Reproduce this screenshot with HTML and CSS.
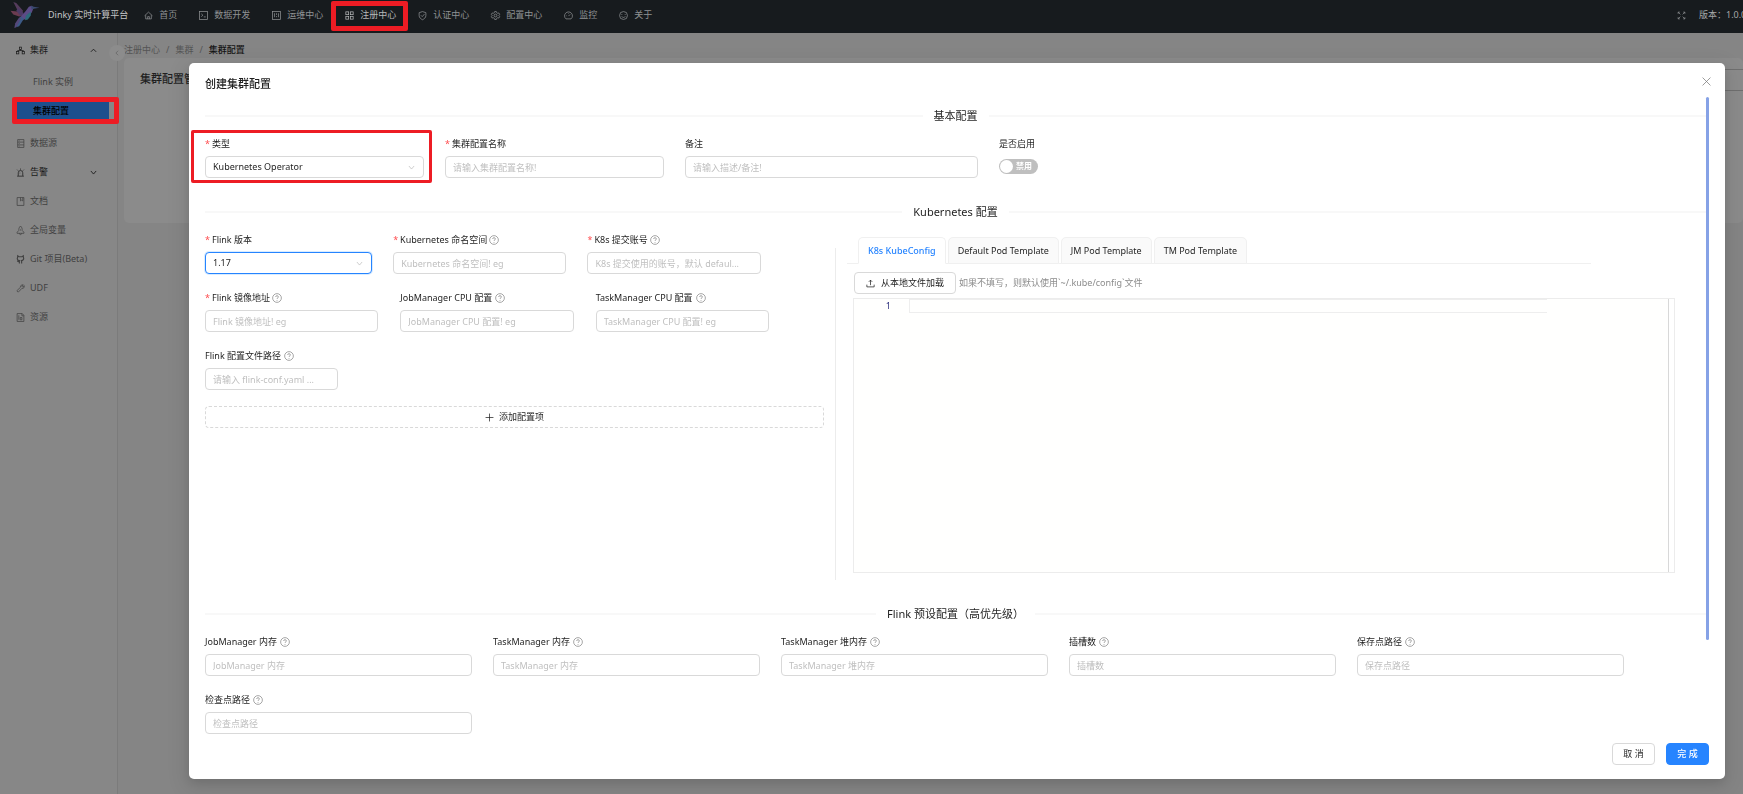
FILE: index.html
```
<!DOCTYPE html>
<html lang="zh-CN">
<head>
<meta charset="utf-8">
<meta name="viewport" content="width=device-width, initial-scale=1">
<title>Dinky 实时计算平台</title>
<link rel="stylesheet" href="styles.css">
</head>
<body>
<svg class="sprite" aria-hidden="true">
  <symbol id="i-help" viewBox="0 0 16 16"><circle cx="8" cy="8" r="7"/><path d="M5.8 6.4c0-1.300 1-2.200 2.200-2.200s2.200.9 2.200 2.100c0 1.500-2.200 1.600-2.200 3.200M8 11.200v1.200"/></symbol>
  <symbol id="i-down" viewBox="0 0 16 16"><path d="M2 4.500l6 7 6-7"/></symbol>
  <symbol id="i-up" viewBox="0 0 16 16"><path d="M2 11l6-6 6 6"/></symbol>
</svg>
<header class="topbar">
  <svg class="logo" viewBox="0 0 40 34" aria-hidden="true">
    <path fill="#553c5c" d="M9 3l3 1 7 8-1 3-4-2z"/>
    <path fill="#6b3b50" d="M6 12l7 1 6 4-4 1-6-2z"/>
    <path fill="#4d3a66" d="M14 9l5 5 2 4-5-1-4-5z"/>
    <path fill="#5c4b86" d="M16 19l6-7 3-4 3-1 2 2-2 5-5 6-5 2z"/>
    <path fill="#3a4a70" d="M27 7l3 1 6 1-6 1-2 1z"/>
    <path fill="#2d6a7a" d="M22 17l5-4v4l-3 4-3 1z"/>
    <path fill="#3c5a86" d="M16 18l4 2-5 8-3 1 1-5z"/>
    <path fill="#54487a" d="M15 19l2 1-5 9-2 1 1-5z"/>
  </svg>
  <span class="brand">Dinky 实时计算平台</span>
  <nav class="menu">
    <a href="#"><svg viewBox="0 0 16 16"><path d="M1 8.500L8 2l7 6.500M3 7.500V14h10V7.500M6.500 14v-4h3v4"/></svg>首页</a>
    <a href="#"><svg viewBox="0 0 16 16"><rect x="1" y="1" width="14" height="14"/><path d="M4 5l3 2.500L4 10M8.500 10.500H12"/></svg>数据开发</a>
    <a href="#"><svg viewBox="0 0 16 16"><rect x="1" y="1" width="14" height="14"/><path d="M4.500 4v7M8 4v3M8 9v2M11.500 4v7"/></svg>运维中心</a>
    <a href="#" class="current"><svg viewBox="0 0 16 16"><rect x="1.500" y="1.500" width="5" height="5"/><rect x="9.500" y="1.500" width="5" height="5"/><rect x="1.500" y="9.500" width="5" height="5"/><rect x="9.500" y="9.500" width="5" height="5"/></svg>注册中心<i class="mark mark-top"></i></a>
    <a href="#"><svg viewBox="0 0 16 16"><path d="M8 1l6 2v5c0 4-3 6-6 7.500C5 14 2 12 2 8V3zM5 7.500L7.500 10 11.500 5.500"/></svg>认证中心</a>
    <a href="#"><svg viewBox="0 0 16 16"><path d="M6.500 1h3l.6 2 1.700 1 2.100-.5 1.500 2.600L14 8l1.400 1.900-1.500 2.600-2.100-.5-1.700 1-.6 2h-3l-.6-2-1.700-1-2.100.5L.6 9.900 2 8 .6 6.100l1.500-2.600 2.100.5 1.700-1z"/><circle cx="8" cy="8" r="2.500"/></svg>配置中心</a>
    <a href="#"><svg viewBox="0 0 16 16"><path d="M3.500 14a7 7 0 1 1 9 0zM8 9l3-3M4 8.500h1M8 3.500v1"/></svg>监控</a>
    <a href="#"><svg viewBox="0 0 16 16"><circle cx="8" cy="8" r="7"/><path d="M5 5.500v1.500M11 5.500v1.500M4.800 9.500c1 2.600 5.400 2.600 6.400 0"/></svg>关于</a>
  </nav>
  <div class="tools">
    <svg viewBox="0 0 16 16" aria-label="全屏"><path d="M2 5V2h3M2 2l4 4M11 2h3v3M14 2l-4 4M2 11v3h3M2 14l4-4M14 11v3h-3M14 14l-4-4"/></svg>
    <span>版本：1.0.0</span>
  </div>
</header>
<div class="page">
  <aside class="sidebar">
    <nav>
      <a href="#" class="dark"><svg viewBox="0 0 16 16"><rect x="6" y="2" width="4" height="4"/><rect x="1" y="10" width="4" height="4"/><rect x="11" y="10" width="4" height="4"/><path d="M8 6v2M3 10V8h10v2"/></svg><span>集群</span><svg class="caret"><use href="#i-up"/></svg></a>
      <a href="#" class="sub first">Flink 实例</a>
      <a href="#" class="sub active"><span>集群配置</span><i class="mark mark-side"></i></a>
      <a href="#"><svg viewBox="0 0 16 16"><path d="M3 1h11v14H3zM3 5.500h11M3 10.500h11M5 3.300h1.500M5 8h1.500M5 12.700h1.500"/></svg><span>数据源</span></a>
      <a href="#" class="dark"><svg viewBox="0 0 16 16"><path d="M2 14.500h12M4 14V8.500a4 4 0 0 1 8 0V14M8 1v2M2 3l1.500 1.500M14 3l-1.500 1.500M6.500 9h1"/></svg><span>告警</span><svg class="caret"><use href="#i-down"/></svg></a>
      <a href="#"><svg viewBox="0 0 16 16"><path d="M2 1h12v14H2zM8 1v6l2-1.500L12 7V1"/></svg><span>文档</span></a>
      <a href="#"><svg viewBox="0 0 16 16"><path d="M8 0c3 3 3 5 3 8l3 3v2H2v-2l3-3c0-3 0-5 3-8zM6 13c0 3 4 3 4 0M8 6v2"/></svg><span>全局变量</span></a>
      <a href="#"><svg viewBox="0 0 16 16"><path stroke-width="2" d="M6 15v-3c-3 .5-3-1-4-1.500M10 15v-3.500c0-1-.3-1.500-.3-1.500 3-.3 4-2 4-4.200L13 4V1.500L10.500 3h-5L3 1.500V4l-.7 2c0 2.200 1 3.700 4 4L6 12"/></svg><span>Git 项目(Beta)</span></a>
      <a href="#"><svg viewBox="0 0 16 16"><path d="M13 1.500l-2.500 2.500 1.500 1.500L14.500 3c1.200 3-1.300 5.400-4 4.700L4 14.500 1.500 12l6.500-6.300C7.300 3 10 .8 13 1.500z"/></svg><span>UDF</span></a>
      <a href="#"><svg viewBox="0 0 16 16"><path d="M2 1h9l3 3v11H2zM10.500 1v4H14M5 4v8M7.500 8v4h3V8z"/></svg><span>资源</span></a>
    </nav>
    <button class="collapse" aria-label="收起"><svg viewBox="0 0 16 16"><path d="M11 2L5 8l6 6"/></svg></button>
  </aside>
  <main class="main">
    <div class="crumbs"><span>注册中心</span><span>/</span><span>集群</span><span>/</span><b>集群配置</b></div>
    <section class="card"><h2>集群配置管理</h2><input class="search" aria-label="搜索"></section>
  </main>
</div>

<div class="overlay">
<form class="dialog" role="dialog" aria-labelledby="dlg-title">
  <header class="dialog-head"><h1 id="dlg-title">创建集群配置</h1>
    <button type="button" class="close" aria-label="关闭"><svg viewBox="0 0 16 16"><path d="M1 1l14 14M15 1L1 15"/></svg></button></header>
  <div class="dialog-body">
    <h3 class="divider">基本配置</h3>
    <div class="basic">
      <div class="field"><label for="type" class="req">类型</label><div class="select"><select id="type"><option>Kubernetes Operator</option></select><svg><use href="#i-down"/></svg></div><i class="mark mark-field"></i></div>
      <div class="field"><label for="name" class="req">集群配置名称</label><input id="name" placeholder="请输入集群配置名称!"></div>
      <div class="field"><label for="note">备注</label><input id="note" placeholder="请输入描述/备注!"></div>
      <div class="field"><label for="enabled">是否启用</label><label class="switch"><input id="enabled" type="checkbox" role="switch"><span>禁用</span></label></div>
    </div>

    <h3 class="divider">Kubernetes 配置</h3>
    <div class="k8s">
      <div class="k8s-form">
        <div class="row row-first">
          <div class="field w-version"><label for="ver" class="req">Flink 版本</label><div class="select focus"><select id="ver"><option>1.17</option></select><svg><use href="#i-down"/></svg></div></div>
          <div class="field w-text"><label for="ns" class="req">Kubernetes 命名空间<svg><use href="#i-help"/></svg></label><input id="ns" placeholder="Kubernetes 命名空间! eg"></div>
          <div class="field w-text"><label for="acc" class="req">K8s 提交账号<svg><use href="#i-help"/></svg></label><input id="acc" placeholder="K8s 提交使用的账号，默认 defaul..."></div>
        </div>
        <div class="row">
          <div class="field w-text"><label for="img" class="req">Flink 镜像地址<svg><use href="#i-help"/></svg></label><input id="img" placeholder="Flink 镜像地址! eg"></div>
          <div class="field w-text"><label for="jmcpu">JobManager CPU 配置<svg><use href="#i-help"/></svg></label><input id="jmcpu" placeholder="JobManager CPU 配置! eg"></div>
          <div class="field w-text"><label for="tmcpu">TaskManager CPU 配置<svg><use href="#i-help"/></svg></label><input id="tmcpu" placeholder="TaskManager CPU 配置! eg"></div>
        </div>
        <div class="row">
          <div class="field w-path"><label for="conf">Flink 配置文件路径<svg><use href="#i-help"/></svg></label><input id="conf" placeholder="请输入 flink-conf.yaml ..."></div>
        </div>
        <button type="button" class="add"><svg viewBox="0 0 16 16"><path d="M8 1v14M1 8h14"/></svg>添加配置项</button>
      </div>
      <div class="rule"></div>
      <div class="k8s-files">
        <div class="tabs" role="tablist">
          <button type="button" role="tab" aria-selected="true">K8s KubeConfig</button>
          <button type="button" role="tab">Default Pod Template</button>
          <button type="button" role="tab">JM Pod Template</button>
          <button type="button" role="tab">TM Pod Template</button>
        </div>
        <div class="upload">
          <button type="button" class="btn"><svg viewBox="0 0 16 16"><path d="M1.500 10v4h13v-4M8 11V2M5 5l3-3 3 3"/></svg>从本地文件加载</button>
          <span>如果不填写，则默认使用`~/.kube/config`文件</span>
        </div>
        <div class="editor">
          <span class="lineno">1</span>
          <div class="code"><textarea rows="1" aria-label="KubeConfig"></textarea></div>
          <div class="ruler"></div>
        </div>
      </div>
    </div>

    <h3 class="divider">Flink 预设配置（高优先级）</h3>
    <div class="presets">
      <div class="field"><label for="p1">JobManager 内存<svg><use href="#i-help"/></svg></label><input id="p1" placeholder="JobManager 内存"></div>
      <div class="field"><label for="p2">TaskManager 内存<svg><use href="#i-help"/></svg></label><input id="p2" placeholder="TaskManager 内存"></div>
      <div class="field"><label for="p3">TaskManager 堆内存<svg><use href="#i-help"/></svg></label><input id="p3" placeholder="TaskManager 堆内存"></div>
      <div class="field"><label for="p4">插槽数<svg><use href="#i-help"/></svg></label><input id="p4" placeholder="插槽数"></div>
      <div class="field"><label for="p5">保存点路径<svg><use href="#i-help"/></svg></label><input id="p5" placeholder="保存点路径"></div>
      <div class="field"><label for="p6">检查点路径<svg><use href="#i-help"/></svg></label><input id="p6" placeholder="检查点路径"></div>
    </div>
    <i class="thumb"></i>
  </div>
  <footer class="dialog-foot">
    <button type="button" class="btn">取 消</button>
    <button type="button" class="btn primary">完 成</button>
  </footer>
</form>
</div>
</body>
</html>
```

FILE: styles.css
```
* { box-sizing: border-box; }
body {
  margin: 0;
  height: 100vh;
  overflow: hidden;
  display: flex;
  flex-direction: column;
  background: #858585;
  color: #1f1f1f;
  font: 9px/16px "Noto Sans", "Noto Sans CJK SC", sans-serif;
}
h1, h2, h3 { margin: 0; font-size: 11px; line-height: 16px; font-weight: 400; }
a { color: inherit; text-decoration: none; }
button, input, select, textarea { font: inherit; color: inherit; margin: 0; }
svg { width: 9px; height: 9px; flex: none; fill: none; stroke: currentColor; stroke-width: 1.3; overflow: visible; }
.sprite { position: absolute; width: 0; height: 0; }

/* red highlight frames lying over the interface */
.mark { position: absolute; pointer-events: none; border: 5px solid #ed1c24; border-radius: 2px; z-index: 5; }
.mark-top { inset: -6px -12px -8px -14px; }
.mark-side { inset: -4px -10px -4px -4px; }
.mark-field { inset: -6px -8px -5px -14px; border-width: 3px; }

.topbar {
  flex: none;
  height: 33px;
  display: flex;
  align-items: center;
  background: #171b1e;
  color: #8f9294;
  padding-bottom: 3px;
  overflow: hidden;
}
.logo { width: 40px; height: 33px; margin-left: 4px; stroke: none; }
.brand { margin-left: 4px; color: #c4c5c6; white-space: nowrap; }
.menu { display: flex; gap: 22px; margin-left: 16px; flex: 1; }
.menu a { position: relative; display: flex; align-items: center; gap: 6px; white-space: nowrap; }
.menu .current { color: #b5b7b8; }
.tools { display: flex; align-items: center; gap: 13px; width: 66px; white-space: nowrap; }
.tools span { color: #a5a7a8; }

.page { flex: 1; display: flex; min-height: 0; }
.sidebar {
  position: relative;
  flex: none;
  width: 118px;
  background: #878787;
  border-right: 1px solid #7b7b7b;
  color: #414141;
  padding: 5px 8px 0 16px;
}
.sidebar nav { display: flex; flex-direction: column; gap: 5px; }
.sidebar a { display: flex; align-items: center; gap: 5px; height: 24px; position: relative; }
.sidebar .dark { color: #1a1a1a; }
.sidebar .caret { margin-left: auto; margin-right: 12px; width: 7px; height: 7px; stroke-width: 2; }
.sidebar .sub { padding-left: 17px; }
.sidebar .first { margin-top: 3px; }
.sidebar .active { height: 19px; margin: 2px 0 6px; background: #1d4f8d; color: #000; font-weight: 500; }
.collapse {
  position: absolute; top: 12px; right: -8px;
  width: 16px; height: 16px; padding: 0; border: 0; border-radius: 50%;
  background: #8c8c8c; color: #4d4d4d;
  display: grid; place-items: center;
}
.collapse svg { width: 6px; height: 6px; }
.main { flex: 1; padding: 9px 0 0 6px; }
.crumbs { display: flex; gap: 6px; color: #545454; }
.crumbs b { color: #141414; font-weight: 500; }
.card { display: flex; justify-content: space-between; height: 165px; background: #8b8b8b; border-radius: 5px; padding: 11px 0 0 16px; }
.card h2 { font-weight: 500; padding-top: 2px; }
.search { width: 160px; height: 22px; background: none; border: 1px solid #6f6f6f; border-right: 0; }

.overlay { position: fixed; inset: 0; padding: 63px 18px 16px 189px; overflow: hidden; }
.dialog {
  position: relative;
  background: #fff;
  border-radius: 5px;
  padding: 0 16px 14px;
  box-shadow: 0 4px 11px rgba(0, 0, 0, .1), 0 6px 19px 5px rgba(0, 0, 0, .08);
}
.dialog-head { display: flex; justify-content: space-between; align-items: center; height: 34px; padding: 13px 0 5px; }
.dialog-head h1 { font-weight: 500; }
.close { width: 16px; height: 16px; margin: 0 -5px 5px 0; padding: 0; border: 0; background: none; color: #777; display: grid; place-items: center; }
.dialog-body { position: relative; padding: 11px 3px 0 0; }
.thumb { position: absolute; top: 0; bottom: 94px; right: 0; width: 3px; border-radius: 2px; background: #86a2e6; }

.divider { display: flex; align-items: center; gap: 11px; margin: 26px 0 12px; white-space: nowrap; }
.divider:first-child { margin-top: 0; }
.divider::before, .divider::after { content: ""; flex: 1; height: 2px; background: #f8f8f8; }

.field { position: relative; min-width: 0; }
.field > label:first-child { display: flex; align-items: center; gap: 3px; height: 16px; margin-bottom: 4px; white-space: nowrap; }
.field > .req:first-child { gap: 2px; }
.field > label svg { width: 10px; height: 10px; color: #8a8a8a; stroke-width: 1.2; }
.req::before { content: "*"; color: #ff4d4f; }
.field > input, .select {
  display: block; width: 100%; height: 22px;
  border: 1px solid #d9d9d9; border-radius: 4px; background: #fff;
}
.field > input { padding: 0 7px; text-overflow: ellipsis; outline: 0; }
::placeholder { color: #bfbfbf; opacity: 1; }
.select { position: relative; }
.select.focus { border-color: #2684ff; box-shadow: 0 0 0 1px #d9ecff; }
.select select { appearance: none; width: 100%; height: 100%; border: 0; background: none; padding: 0 7px; outline: 0; }
.select svg { position: absolute; right: 8px; top: 7px; width: 7px; height: 7px; color: #aaa; }

.basic { display: grid; grid-template-columns: 219fr 219fr 293fr 707fr; gap: 21px; }
.switch { display: flex; width: 39px; height: 15px; margin-top: 7px; border-radius: 8px; background: #bfbfbf; position: relative; }
.switch input { appearance: none; width: 13px; height: 13px; margin: 1px 3px 0 1px; border-radius: 50%; background: #fff; }
.switch span { color: #fff; font-size: 8px; line-height: 14px; font-weight: 700; }

.k8s { display: grid; column-gap: 11px; grid-template-columns: 619fr 1px 859fr; }
.rule { background: #ececec; margin: 16px 0 0; }
.row { display: flex; gap: 22px; margin-bottom: 16px; }
.row-first { gap: 21px; }
.w-version { width: 27%; }
.w-text { width: 28%; }
.w-path { width: 133px; }
.add { display: flex; align-items: center; justify-content: center; gap: 5px; width: 100%; height: 22px; border: 1px dashed #d9d9d9; border-radius: 4px; background: #fff; }
.k8s-files { padding: 5px 31px 7px 0; display: flex; flex-direction: column; }
.tabs { display: flex; gap: 2px; padding-left: 11px; margin-right: 84px; height: 27px; border-bottom: 1px solid #f0f0f0; }
.tabs button { height: 27px; padding: 0 9px; border: 1px solid #f0f0f0; border-radius: 5px 5px 0 0; background: #fafafa; white-space: nowrap; }
.tabs [aria-selected] { background: #fff; border-bottom-color: #fff; color: #2684ff; font-weight: 500; }
.upload { display: flex; align-items: center; gap: 3px; margin: 8px 0 4px 7px; color: #8c8c8c; }
.btn { display: flex; align-items: center; justify-content: center; gap: 6px; height: 22px; padding: 0 11px; border: 1px solid #d9d9d9; border-radius: 4px; background: #fff; color: #1f1f1f; white-space: nowrap; }
.editor { display: flex; height: 275px; margin-left: 6px; border: 1px solid #ececec; background: #fffffe; }
.lineno { width: 55px; padding-right: 18px; text-align: right; color: #2b2f7e; line-height: 14px; }
.code { flex: 1; }
.code textarea { display: block; width: 84%; height: 14px; padding: 0 2px; border: 1px solid #eee; border-right: 0; background: none; resize: none; outline: 0; overflow: hidden; line-height: 12px; }
.ruler { width: 6px; border-left: 1px solid #d8d8d8; background: #fff; }

.presets { display: grid; grid-template-columns: repeat(5, 1fr); gap: 16px 21px; padding-right: 82px; }
.dialog-foot { display: flex; justify-content: flex-end; gap: 11px; margin-top: 9px; }
.dialog-foot .btn { width: 43px; }
.btn.primary { background: #2684ff; border-color: #2684ff; color: #fff; font-weight: 500; }
```
